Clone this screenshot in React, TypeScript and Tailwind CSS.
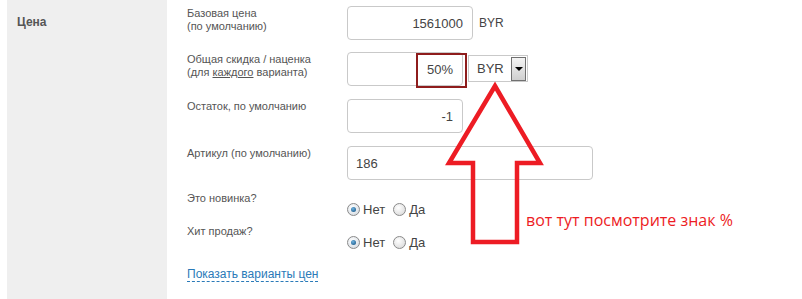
const Radio = ({ checked, label }: { checked?: boolean; label: string }) => (
  <label className="flex items-center mr-[8px]">
    <span
      className={
        'relative w-[13px] h-[13px] rounded-full border border-[#8a8a8a] ' +
        (checked ? 'bg-[radial-gradient(circle_at_40%_35%,#ffffff,#cfd6dd)]' : 'bg-[radial-gradient(circle_at_40%_35%,#ffffff,#d4d4d4)]')
      }
    >
      {checked && (
        <span className="absolute left-[3px] top-[3px] w-[5px] h-[5px] rounded-full bg-[radial-gradient(circle_at_40%_35%,#6fb3e0,#0d4a7a)]" />
      )}
    </span>
    <span className="ml-[3px] text-[13px] text-[#444]">{label}</span>
  </label>
);

const Field = ({ value, className, align = 'right' }: { value: string; className: string; align?: 'left' | 'right' }) => (
  <div
    className={
      'h-[34px] rounded-[4px] border border-[#c9c9c9] bg-white flex items-center text-[13px] text-[#444] ' +
      (align === 'right' ? 'justify-end pr-[9px] ' : 'pl-[8px] ') +
      className
    }
  >
    {value}
  </div>
);

export default function App() {
  return (
    <div className="relative w-[802px] h-[299px] bg-white overflow-hidden flex font-['Liberation_Sans',Arial,sans-serif]">
      <div className="ml-[7px] w-[160px] bg-[#efefef] pl-[10px] pt-[13px]">
        <div className="text-[12px] font-bold text-[#555]">Цена</div>
      </div>

      <div className="ml-[20px] flex flex-col text-[11px] leading-[13px] text-[#555]">
        <div className="mt-[6px] flex">
          <div className="w-[160px] pt-[1px]">
            Базовая цена
            <br />
            (по умолчанию)
          </div>
          <Field value="1561000" className="w-[126px]" />
          <div className="ml-[6px] self-center text-[12px] text-[#444]">BYR</div>
        </div>

        <div className="mt-[12px] flex">
          <div className="w-[160px] pt-[1px]">
            Общая скидка / наценка
            <br />
            (для <span className="underline">каждого</span> варианта)
          </div>
          <Field value="50%" className="w-[116px] h-[33px] border-[#b9c9d8]" />
          <div className="mt-[3px] ml-[5px] w-[60px] h-[27px] border border-[#c9c9c9] bg-white flex items-center justify-between pl-[8px] pr-[1px]">
            <span className="text-[13px] text-[#444]">BYR</span>
            <span className="w-[15px] h-[24px] border border-[#707070] bg-[linear-gradient(#f4f4f4,#cfcfcf)] flex items-center justify-center">
              <span className="w-0 h-0 border-l-[4px] border-r-[4px] border-t-[4px] border-l-transparent border-r-transparent border-t-black" />
            </span>
          </div>
        </div>

        <div className="mt-[13px] flex">
          <div className="w-[160px] pt-[1px]">Остаток, по умолчанию</div>
          <Field value="-1" className="w-[116px]" />
        </div>

        <div className="mt-[13px] flex">
          <div className="w-[160px] pt-[1px]">Артикул (по умолчанию)</div>
          <Field value="186" align="left" className="w-[246px]" />
        </div>

        <div className="mt-[12px] flex">
          <div className="w-[160px]">Это новинка?</div>
          <div className="pt-[11px] flex items-center">
            <Radio checked label="Нет" />
            <Radio label="Да" />
          </div>
        </div>

        <div className="mt-[9px] flex">
          <div className="w-[160px]">Хит продаж?</div>
          <div className="pt-[11px] flex items-center">
            <Radio checked label="Нет" />
            <Radio label="Да" />
          </div>
        </div>

        <div className="mt-[18px]">
          <span className="text-[12px] leading-[15px] text-[#2a7ab8] border-b border-dashed border-[#2a7ab8]">
            Показать варианты цен
          </span>
        </div>
      </div>

      <div className="absolute left-[416px] top-[53px] w-[51px] h-[35px] border-2 border-[#8e1c1c]" />

      <svg className="absolute left-0 top-0" width="802" height="299">
        <polygon
          points="495,86 540,163 517,163 517,242 473,242 473,163 449,163"
          fill="none"
          stroke="#ed1c24"
          strokeWidth="4.5"
          strokeLinejoin="miter"
        />
      </svg>

      <div className="absolute left-[526px] top-[208px] text-[16px] text-[#ed1c24] font-['Open_Sans',sans-serif]">
        вот тут посмотрите знак %
      </div>
    </div>
  );
}
